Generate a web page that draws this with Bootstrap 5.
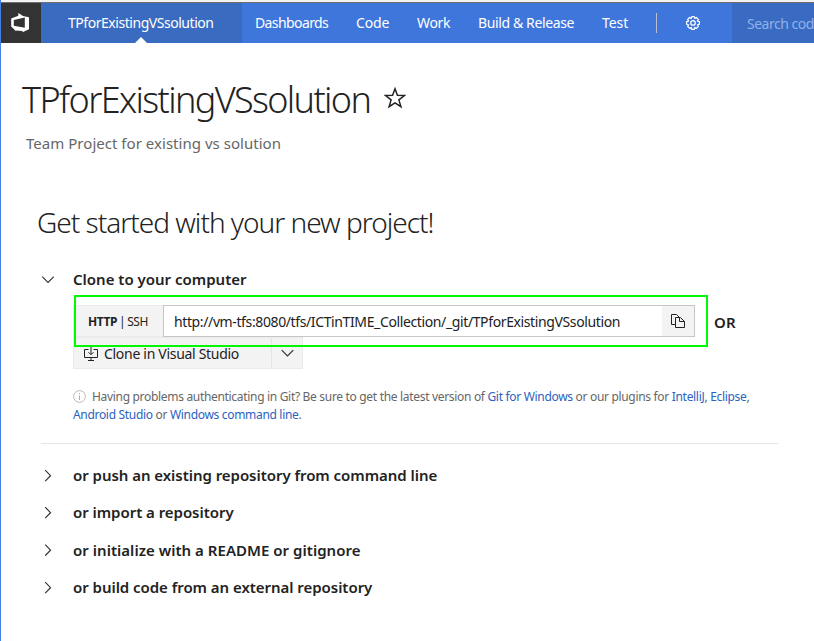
<!DOCTYPE html>
<html lang="en">
<head>
<meta charset="utf-8">
<meta name="viewport" content="width=device-width, initial-scale=1">
<title>TPforExistingVSsolution</title>
<link href="https://cdn.jsdelivr.net/npm/bootstrap@5.3.0/dist/css/bootstrap.min.css" rel="stylesheet">
<style>
  body { font-family: "Noto Sans", "Open Sans", sans-serif; color: #222; font-size: 14px; background: #fff; }
  .page-frame { min-height: 641px; border-left: 1px solid #4580e4; }
  svg { display: block; flex: none; }

  .top-strip { height: 3px; background: #f3f3f3; border-bottom: 1px solid #6f6f6f; }
  .top-bar { height: 40px; background: #3e76dc; color: #fff; line-height: 40px; white-space: nowrap; }
  .logo-box { width: 40px; background: #333; }
  .project-tab { width: 201px; background: #396bc1; padding-left: 27px; letter-spacing: -.46px; color: #fff; }
  .project-tab:hover { color: #fff; }
  .caret-up { left: 94px; bottom: 0; }
  .hub { color: #fff; text-decoration: none; padding: 0; }
  .hub-dash { margin-left: 13px; width: 101px; letter-spacing: -.6px; }
  .hub-code { width: 61px; letter-spacing: -.15px; }
  .hub-work { width: 61px; letter-spacing: -.3px; }
  .hub-build { width: 124px; letter-spacing: -.38px; }
  .hub-test { width: 54px; letter-spacing: -.05px; }
  .bar-rule { width: 1px; height: 20px; background: #b9bfcc; margin-right: 29px; }
  .search-box { width: 82px; background: #396bc2; color: #8fb1ea; padding-left: 15px; letter-spacing: -.5px; padding-top: 1px; }

  .project-title { font-size: 36px; font-weight: 300; line-height: 50px; letter-spacing: -1.63px; width: 362px; white-space: nowrap; }
  .title-row { margin-top: 32px; padding-left: 21px; }
  .title-row svg { margin-bottom: 4px; }
  .subtitle { font-size: 15px; line-height: 24px; color: #666; padding-left: 25px; margin-top: 6px; letter-spacing: .03px; }
  .started { font-size: 28px; font-weight: 300; line-height: 40px; padding-left: 36px; margin-top: 47px; letter-spacing: -1px; }

  .step-row { font-size: 15px; font-weight: 600; height: 37.4px; padding-left: 40px; letter-spacing: -.04px; }
  .step-row svg { margin-right: 19px; }
  .step-open { height: 24px; margin-top: 25px; letter-spacing: 0; }
  .step-wide { letter-spacing: .03px; }

  .clone-area { width: 700px; margin: 14px 0 0 72px; }
  .protocol { width: 90px; height: 32px; background: #f3f3f3; border: 1px solid #ebebeb; border-right: 0; font-size: 12px; padding: 1px 0 0 14px; letter-spacing: -.4px; word-spacing: -.8px; white-space: pre; }
  .url-field { width: 532px; height: 32px; border: 1px solid #c6c6c6; line-height: 32px; letter-spacing: -.38px; padding-left: 10px; white-space: nowrap; }
  .copy-btn { width: 32px; background: #f3f3f3; }
  .or-label { font-size: 15px; font-weight: 600; margin-left: 19px; letter-spacing: .2px; padding-top: 2px; }
  .vs-btn { width: 230px; height: 32px; background: #f3f3f3; border: 1px solid #ebebeb; }
  .vs-main { padding: 1px 0 0 10px; letter-spacing: -.3px; }
  .vs-main svg { margin: 1px 6px 0 0; }
  .vs-drop { width: 31px; border-left: 1px solid #e4e4e4; }
  .highlight { left: 1px; top: -10px; width: 634px; height: 52px; border: 2px solid #00f800; pointer-events: none; }

  .hint { font-size: 12px; line-height: 18px; color: #666; margin: 19px 0 0 72px; letter-spacing: -.315px; white-space: nowrap; }
  .hint a { color: #2b62bf; text-decoration: none; }
  .hint svg { display: inline-block; vertical-align: -2px; margin-right: 6px; }
  .section-rule { width: 737px; height: 1px; background: #e6e6e6; margin: 19px 0 12.5px 40px; }
</style>
</head>
<body>
<div class="page-frame overflow-hidden">
  <div class="top-strip"></div>
  <nav class="top-bar d-flex">
    <a class="logo-box d-flex align-items-center" href="#" aria-label="Home">
      <svg width="40" height="40" viewBox="0 0 40 40"><path fill="#fff" fill-rule="evenodd" d="M10.200 15.500 17.300 12.800V10L22 13 28 14.300V26.300L21.500 29.200V28L14.500 27.500 15.500 29 12.800 26 10.200 23.500ZM12.800 17V22.800L23.800 24.800V14.600Z"/></svg>
    </a>
    <a class="project-tab position-relative text-decoration-none" href="#">TPforExistingVSsolution
      <svg class="caret-up position-absolute" width="12" height="6" viewBox="0 0 12 6"><path d="M0 6 6 0l6 6z" fill="#fff"/></svg>
    </a>
    <a class="hub hub-dash" href="#">Dashboards</a>
    <a class="hub hub-code" href="#">Code</a>
    <a class="hub hub-work" href="#">Work</a>
    <a class="hub hub-build" href="#">Build &amp; Release</a>
    <a class="hub hub-test" href="#">Test</a>
    <span class="bar-rule align-self-center"></span>
    <svg class="align-self-center" width="14" height="14" viewBox=".7 -.2 13.600 13.600" fill="none" stroke="#fff"><path stroke-width="1.200" stroke-linejoin="round" d="M6.300.4h2.400l.5 1.700 1.600-.9 1.900 1.900-.9 1.600 1.900.5v2.600l-1.900.5.9 1.600-1.900 1.900-1.600-.9-.5 1.800H6.300l-.5-1.800-1.600.9-1.900-1.900.9-1.600-1.900-.5V5.200l1.900-.5-.9-1.600 1.900-1.900 1.600.9z"/><circle cx="7.500" cy="6.500" r="2.200" stroke-width="1.200"/></svg>
    <div class="search-box ms-auto">Search cod</div>
  </nav>

  <main>
    <div class="title-row d-flex align-items-center">
      <h1 class="project-title mb-0">TPforExistingVSsolution</h1>
      <svg width="22" height="22" viewBox="0 0 22 22"><path d="M11 1.800 13.400 8.300 20.500 8.500 14.900 12.900 16.900 19.700 11 15.800 5.100 19.700 7.100 12.900 1.500 8.500 8.600 8.300Z" fill="none" stroke="#222" stroke-width="1.500"/></svg>
    </div>
    <p class="subtitle mb-0">Team Project for existing vs solution</p>
    <h2 class="started mb-0">Get started with your new project!</h2>

    <div class="step-row step-open d-flex align-items-center">
      <svg width="13" height="13" viewBox="0 0 13 13"><path d="M1.200 3.700 7 9.500 12.800 3.700" fill="none" stroke="#333" stroke-width="1.100"/></svg>
      <span>Clone to your computer</span>
    </div>

    <div class="clone-area position-relative">
      <div class="d-flex align-items-center">
        <div class="protocol d-flex flex-shrink-0 align-items-center"><b>HTTP</b> | SSH</div>
        <div class="url-field d-flex flex-shrink-0 justify-content-between"><span>http://vm-tfs:8080/tfs/ICTinTIME_Collection/_git/TPforExistingVSsolution</span>
          <span class="copy-btn d-flex align-items-center justify-content-center"><svg width="14" height="14" viewBox="0 0 14 14" fill="none" stroke="#222"><path d="M4.500 10.500H.5V.5H5.500L8.500 3.500M4.500 3.500V13.500H13.500V7.500L9.500 3.500ZM8.500 3.500V7.500H13.500"/></svg></span>
        </div>
        <span class="or-label">OR</span>
      </div>
      <div class="vs-btn d-flex">
        <div class="vs-main d-flex align-items-center flex-grow-1"><svg width="14" height="14" viewBox="0 0 14 14" fill="none" stroke="#222"><path d="M4.500 2.500H.5V10.500H13.500V2.500H9.500M7 0V7.500M4.500 5.200 7 7.700 9.500 5.200M7 10.500V13M4 13.500H10"/></svg>Clone in Visual Studio</div>
        <div class="vs-drop d-flex align-items-center justify-content-center"><svg width="13" height="13" viewBox="0 0 13 13"><path d="M.7 3.200 6.500 9 12.300 3.200" fill="none" stroke="#333" stroke-width="1.200"/></svg></div>
      </div>
      <div class="highlight position-absolute"></div>
    </div>

    <p class="hint"><svg width="13" height="13" viewBox="0 0 13 13"><circle cx="6.500" cy="6.500" r="5.900" fill="none" stroke="#bbb"/><path d="M6.500 3v1.200M6.500 5.500V10" stroke="#aaa"/></svg>Having problems authenticating in Git? Be sure to get the latest version of <a href="#">Git for Windows</a> or our plugins for <a href="#">IntelliJ</a>, <a href="#">Eclipse</a>,<br><a href="#">Android Studio</a> or <a href="#">Windows command line</a>.</p>
    <div class="section-rule"></div>

    <div class="step-row d-flex align-items-center"><svg width="13" height="13" viewBox="0 0 13 13"><path d="M4.200 1.200 9.500 6.700 4.200 12.200" fill="none" stroke="#333" stroke-width="1.200"/></svg><span>or push an existing repository from command line</span></div>
    <div class="step-row d-flex align-items-center"><svg width="13" height="13" viewBox="0 0 13 13"><path d="M4.200 1.200 9.500 6.700 4.200 12.200" fill="none" stroke="#333" stroke-width="1.200"/></svg><span>or import a repository</span></div>
    <div class="step-row step-wide d-flex align-items-center"><svg width="13" height="13" viewBox="0 0 13 13"><path d="M4.200 1.700 9.500 7.200 4.200 12.700" fill="none" stroke="#333" stroke-width="1.200"/></svg><span>or initialize with a README or gitignore</span></div>
    <div class="step-row d-flex align-items-center"><svg width="13" height="13" viewBox="0 0 13 13"><path d="M4.200 1.200 9.500 6.700 4.200 12.200" fill="none" stroke="#333" stroke-width="1.200"/></svg><span>or build code from an external repository</span></div>
  </main>
</div>
<script src="https://cdn.jsdelivr.net/npm/bootstrap@5.3.0/dist/js/bootstrap.bundle.min.js"></script>
</body>
</html>
